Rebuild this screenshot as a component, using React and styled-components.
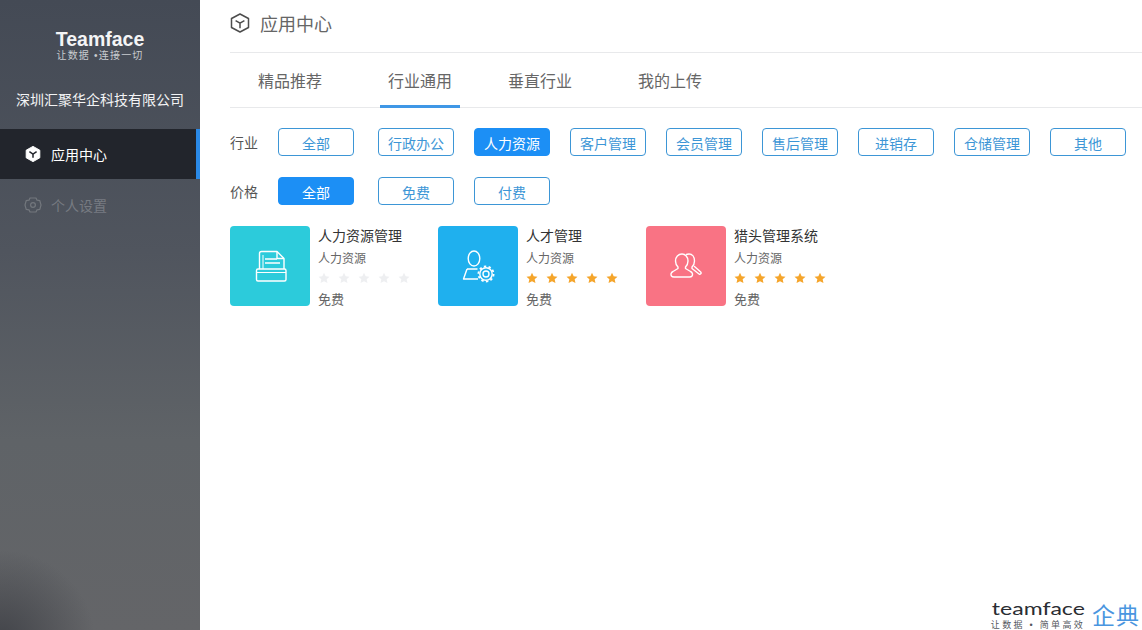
import styled, { createGlobalStyle } from "styled-components";

const GlobalStyle = createGlobalStyle`
  html, body {
    margin: 0;
    padding: 0;
    height: 100%;
    overflow: hidden;
    background: #fff;
  }
  body {
    font-family: "Noto Sans CJK SC", "Liberation Sans", sans-serif;
  }
  * {
    box-sizing: border-box;
  }
`;

const industries = ["全部", "行政办公", "人力资源", "客户管理", "会员管理", "售后管理", "进销存", "仓储管理", "其他"];
const prices = ["全部", "免费", "付费"];

const tabs = [
  { name: "精品推荐", gap: 0 },
  { name: "行业通用", gap: 50, active: true },
  { name: "垂直行业", gap: 40 },
  { name: "我的上传", gap: 50 },
];

const apps = [
  { name: "人力资源管理", color: "#2ccbdb", icon: "printer", rating: 0 },
  { name: "人才管理", color: "#1fb0ee", icon: "user", rating: 5 },
  { name: "猎头管理系统", color: "#f97384", icon: "group", rating: 5 },
];

function CubeIcon({ size = 20, color = "#4d4d4d" }) {
  return (
    <svg width={size} height={size} viewBox="0 0 20 20" fill="none" stroke={color} strokeWidth="1.5" strokeLinejoin="round">
      <path d="M10 1 18.500 5.500v9L10 19l-8.500-4.500v-9z" />
      <path d="M5.600 7.600 10 10.200l4.400-2.600M10 10.200v5" />
    </svg>
  );
}

function SolidCube() {
  return (
    <svg width="16" height="16" viewBox="0 0 16 16">
      <path d="M8 .4 14.800 4.200v7.600L8 15.600 1.200 11.800V4.200z" fill="#fff" stroke="#fff" strokeLinejoin="round" />
      <path d="M4.400 5.600 8 8l3.600-2.400M8 8v3.800" fill="none" stroke="#22252c" strokeWidth="1.500" />
    </svg>
  );
}

function GearIcon() {
  return (
    <svg width="18" height="18" viewBox="0 0 18 18" fill="none" stroke="#73777d" strokeWidth="1.200" strokeLinejoin="round">
      <path d="M6 2h6l1 2.200 2.800.5L17 9l-1.200 4.300-2.800.5L12 16H6l-1-2.200-2.800-.5L1 9l1.200-4.300L5 4.200z" />
      <circle cx="9" cy="9" r="2.400" />
    </svg>
  );
}

function AppIcon({ type }) {
  if (type === "printer") {
    return (
      <svg width="40" height="40" viewBox="0 0 40 40" fill="none" stroke="#fff" strokeWidth="1.400" strokeLinejoin="round">
        <g transform="translate(-1 0)">
          <path d="M10.500 23V7.500a2 2 0 0 1 2-2H28l7 7V23" />
          <path d="M28 5.500v7h7" />
          <path d="M14 23V9" strokeWidth="1" />
          <path d="M16 13h12M16 17h15" />
          <rect x="7.500" y="23" width="29.500" height="12" rx="1.500" />
          <path d="M7.500 26.500H37" strokeWidth="1" />
        </g>
      </svg>
    );
  }
  if (type === "user") {
    return (
      <svg width="40" height="40" viewBox="0 0 40 40" fill="none" stroke="#fff" strokeWidth="1.400" strokeLinejoin="round">
        <ellipse cx="16" cy="12.500" rx="5.800" ry="7.500" />
        <path d="M9 23h10.500M9 23 5.500 33H20" />
        <circle cx="28" cy="28" r="6.200" />
        <circle cx="28" cy="28" r="7.600" strokeWidth="1.800" strokeDasharray="2.400 2.375" />
        <circle cx="28" cy="28" r="3" />
      </svg>
    );
  }
  return (
    <svg width="40" height="40" viewBox="0 0 40 40" fill="none" stroke="#fff" strokeWidth="1.400" strokeLinejoin="round" strokeLinecap="round">
      <path d="M16 8c-3.800 0-6.500 3-6.500 7 0 2.500 1 4.500 2.500 6v1.500L7 25.500c-2 1-2.500 3-1.500 4.500.5.700 1.500 1 2.500 1h15.500c1 0 2-.300 2.500-1 1-1.500.500-3.500-1.500-4.500l-5-3V21c1.500-1.500 2.500-3.500 2.500-6 0-4-2.700-7-6-7z" />
      <path d="M20.500 8.500c.8-.4 1.700-.5 2.500-.5 3.300 0 5.500 3 5.500 7 0 2.500-1 4.500-2.500 6v1.500l7 5.500c1.200 1 2.800-.8 1.700-2l-6.200-5.500" />
    </svg>
  );
}

function Star({ on }) {
  return (
    <StarSvg viewBox="0 0 24 24">
      <path fill={on ? "#f5a52b" : "#eeeff1"} d="M12 1.500l3.300 7 7.700.9-5.700 5.200 1.600 7.600L12 18.400l-6.900 3.800 1.600-7.600L1 9.400l7.700-.9z" />
    </StarSvg>
  );
}

export default function App() {
  return (
    <Page>
      <GlobalStyle />
      <Sidebar>
        <Brand>
          <BrandName>Teamface</BrandName>
          <BrandSlogan>让数据 •连接一切</BrandSlogan>
        </Brand>
        <Company>深圳汇聚华企科技有限公司</Company>
        <MenuItem $active>
          <SolidCube />
          应用中心
        </MenuItem>
        <MenuItem>
          <GearIcon />
          个人设置
        </MenuItem>
      </Sidebar>

      <Main>
        <Header>
          <CubeIcon />
          <HeaderTitle>应用中心</HeaderTitle>
        </Header>

        <TabBar>
          {tabs.map((t) => (
            <Tab key={t.name} $gap={t.gap} $active={t.active}>
              {t.name}
            </Tab>
          ))}
        </TabBar>

        <FilterRow>
          <FilterLabel>行业</FilterLabel>
          {industries.map((name, i) => (
            <FilterButton key={name} $active={name === "人力资源"} $first={i === 0}>
              {name}
            </FilterButton>
          ))}
        </FilterRow>
        <FilterRow>
          <FilterLabel>价格</FilterLabel>
          {prices.map((name, i) => (
            <FilterButton key={name} $active={i === 0} $first={i === 0}>
              {name}
            </FilterButton>
          ))}
        </FilterRow>

        <CardList>
          {apps.map((app) => (
            <Card key={app.name}>
              <IconTile $color={app.color}>
                <AppIcon type={app.icon} />
              </IconTile>
              <CardBody>
                <CardTitle>{app.name}</CardTitle>
                <CardMeta>人力资源</CardMeta>
                <Stars>
                  {[1, 2, 3, 4, 5].map((n) => (
                    <Star key={n} on={n <= app.rating} />
                  ))}
                </Stars>
                <CardPrice>免费</CardPrice>
              </CardBody>
            </Card>
          ))}
        </CardList>
      </Main>

      <Watermark>
        <WatermarkText>
          <WatermarkName>teamface</WatermarkName>
          <WatermarkSlogan>让数据 • 简单高效</WatermarkSlogan>
        </WatermarkText>
        <WatermarkTitle>企典</WatermarkTitle>
      </Watermark>
    </Page>
  );
}

const Page = styled.div`
  display: flex;
  width: 1142px;
  height: 630px;
  overflow: hidden;
  position: relative;
`;

const Sidebar = styled.aside`
  width: 200px;
  flex: none;
  height: 100%;
  color: #fff;
  background:
    radial-gradient(ellipse 95px 90px at 0 640px, rgba(58, 60, 66, 0.8), rgba(58, 60, 66, 0) 100%),
    linear-gradient(180deg, #444a55 0%, #50555e 40%, #5f6367 70%, #646568 100%);
`;

const Brand = styled.div`
  height: 81px;
  padding-top: 28.500px;
  text-align: center;
`;

const BrandName = styled.div`
  font-family: "Liberation Sans", Arial, sans-serif;
  font-size: 19.500px;
  font-weight: 700;
  line-height: 20px;
  color: #f4f5f6;
`;

const BrandSlogan = styled.div`
  font-family: "Liberation Sans", "Noto Sans CJK SC", sans-serif;
  font-size: 10px;
  line-height: 13px;
  letter-spacing: 1.200px;
  color: #c9ccd0;
`;

const Company = styled.div`
  height: 48px;
  padding-top: 7px;
  font-size: 14px;
  line-height: 22px;
  text-align: center;
  white-space: nowrap;
  color: #f3f4f5;
`;

const MenuItem = styled.div`
  display: flex;
  align-items: center;
  gap: ${(p) => (p.$active ? "10px" : "9px")};
  height: 50px;
  padding-left: ${(p) => (p.$active ? "25px" : "24px")};
  margin-bottom: 1px;
  font-size: 14px;
  color: ${(p) => (p.$active ? "#fff" : "#777b82")};
  background: ${(p) => (p.$active ? "#22252c" : "transparent")};
  border-right: 4px solid ${(p) => (p.$active ? "#2a89e6" : "transparent")};
`;

const Main = styled.main`
  flex: 1;
  min-width: 0;
  padding-left: 30px;
`;

const Header = styled.header`
  display: flex;
  align-items: center;
  gap: 10px;
  height: 53px;
  padding-bottom: 7px;
  border-bottom: 1px solid #e8e9eb;
`;

const HeaderTitle = styled.h1`
  margin: 0;
  font-size: 18px;
  font-weight: 400;
  color: #666;
`;

const TabBar = styled.nav`
  display: flex;
  height: 55px;
  padding-left: 20px;
  border-bottom: 1px solid #e8e9eb;
`;

const Tab = styled.div`
  width: 80px;
  height: 55px;
  margin-left: ${(p) => p.$gap}px;
  padding-top: 15px;
  font-size: 16px;
  line-height: 24px;
  text-align: center;
  color: #666;
  border-bottom: 3px solid ${(p) => (p.$active ? "#3f97e6" : "transparent")};
`;

const FilterRow = styled.div`
  display: flex;
  align-items: center;
  gap: 20px;
  height: 28px;
  margin-top: 20px;
  & + & {
    margin-top: 21px;
  }
`;

const FilterLabel = styled.span`
  width: 28px;
  font-size: 14px;
  color: #555;
  white-space: nowrap;
`;

const FilterButton = styled.button`
  width: 76px;
  height: 28px;
  margin-right: ${(p) => (p.$first ? "4px" : "0")};
  padding: 2px 0 0;
  font-family: inherit;
  font-size: 14px;
  line-height: 24px;
  border-radius: 4px;
  border: 1px solid ${(p) => (p.$active ? "#1c8ff5" : "#3d96d6")};
  color: ${(p) => (p.$active ? "#fff" : "#3d96d6")};
  background: ${(p) => (p.$active ? "#1c8ff5" : "#fff")};
`;

const CardList = styled.div`
  display: flex;
  gap: 28px;
  margin-top: 21px;
`;

const Card = styled.article`
  display: flex;
  gap: 8px;
  width: 180px;
`;

const IconTile = styled.div`
  display: flex;
  align-items: center;
  justify-content: center;
  width: 80px;
  height: 80px;
  flex: none;
  border-radius: 4px;
  background: ${(p) => p.$color};
`;

const CardBody = styled.div`
  display: flex;
  flex-direction: column;
  width: 92px;
`;

const CardTitle = styled.div`
  font-size: 14px;
  line-height: 18px;
  color: #333;
  white-space: nowrap;
`;

const CardMeta = styled.div`
  font-size: 12px;
  line-height: 20px;
  margin-top: 4px;
  color: #666;
  white-space: nowrap;
`;

const CardPrice = styled.div`
  font-size: 13px;
  line-height: 20px;
  margin-top: 1px;
  color: #666;
  white-space: nowrap;
`;

const Stars = styled.div`
  display: flex;
  gap: 8px;
  height: 20px;
  align-items: center;
`;

const StarSvg = styled.svg`
  width: 12px;
  height: 12px;
  flex: none;
`;

const Watermark = styled.div`
  position: absolute;
  right: 2px;
  bottom: 0;
  display: flex;
  align-items: flex-end;
  gap: 7px;
`;

const WatermarkText = styled.div`
  display: flex;
  flex-direction: column;
  align-items: center;
`;

const WatermarkName = styled.div`
  font-family: "Lato", "Open Sans", sans-serif;
  font-size: 18px;
  font-weight: 400;
  line-height: 23px;
  color: #2a2d33;
  transform: scaleX(1.28);
`;

const WatermarkSlogan = styled.div`
  font-family: "Liberation Sans", "Noto Sans CJK SC", sans-serif;
  font-size: 9px;
  line-height: 10px;
  letter-spacing: 2.300px;
  white-space: nowrap;
  color: #55585e;
`;

const WatermarkTitle = styled.div`
  font-family: "Liberation Sans", "Noto Sans CJK SC", sans-serif;
  font-size: 23px;
  line-height: 28px;
  letter-spacing: 1px;
  color: #4a96e0;
`;
